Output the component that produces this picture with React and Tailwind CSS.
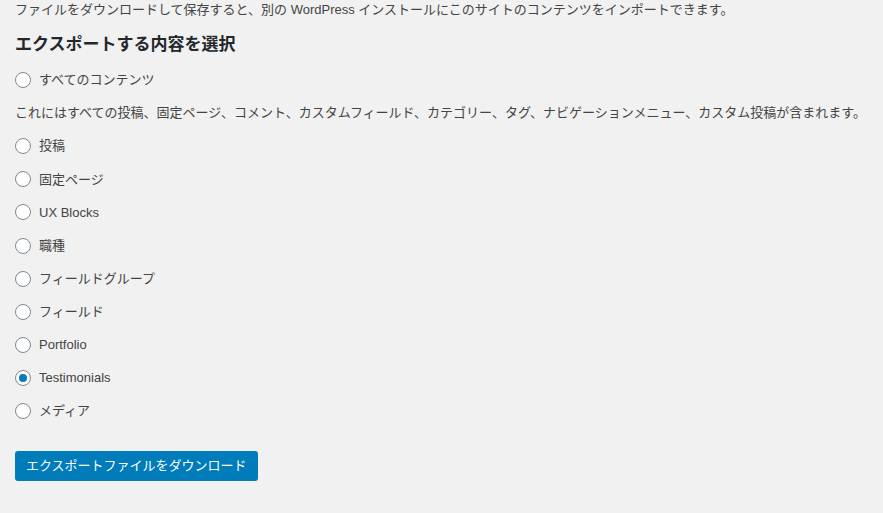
const font = { fontFamily: '"Liberation Sans", "Noto Sans CJK JP", sans-serif' };

function Radio({ label, checked }) {
  return (
    <label className="flex h-[33.125px] items-center gap-2 text-[13px] text-[#444]">
      <span className="flex h-4 w-4 shrink-0 items-center justify-center rounded-full border border-[#7e8993] bg-white">
        {checked && <span className="h-2 w-2 rounded-full bg-[#007cba]" />}
      </span>
      <span>{label}</span>
    </label>
  );
}

export default function App() {
  const types = [
    '投稿',
    '固定ページ',
    'UX Blocks',
    '職種',
    'フィールドグループ',
    'フィールド',
    'Portfolio',
    'Testimonials',
    'メディア',
  ];

  return (
    <div className="min-h-[513px] bg-[#f1f1f1] px-[15px]" style={font}>
      <p className="text-[13px] leading-[19px] text-[#444]">
        ファイルをダウンロードして保存すると、別の WordPress インストールにこのサイトのコンテンツをインポートできます。
      </p>
      <h2 className="mt-[14px] text-[17px] font-bold leading-6 text-[#23282d]">
        エクスポートする内容を選択
      </h2>
      <div className="mt-[6.5px]">
        <Radio label="すべてのコンテンツ" />
        <p className="flex h-[33px] items-center text-[13px] text-[#444]">
          これにはすべての投稿、固定ページ、コメント、カスタムフィールド、カテゴリー、タグ、ナビゲーションメニュー、カスタム投稿が含まれます。
        </p>
        {types.map((t) => (
          <Radio key={t} label={t} checked={t === 'Testimonials'} />
        ))}
      </div>
      <button className="mt-[23px] h-[30px] rounded-[3px] bg-[#007cba] px-[11px] text-[13px] text-white">
        エクスポートファイルをダウンロード
      </button>
    </div>
  );
}
